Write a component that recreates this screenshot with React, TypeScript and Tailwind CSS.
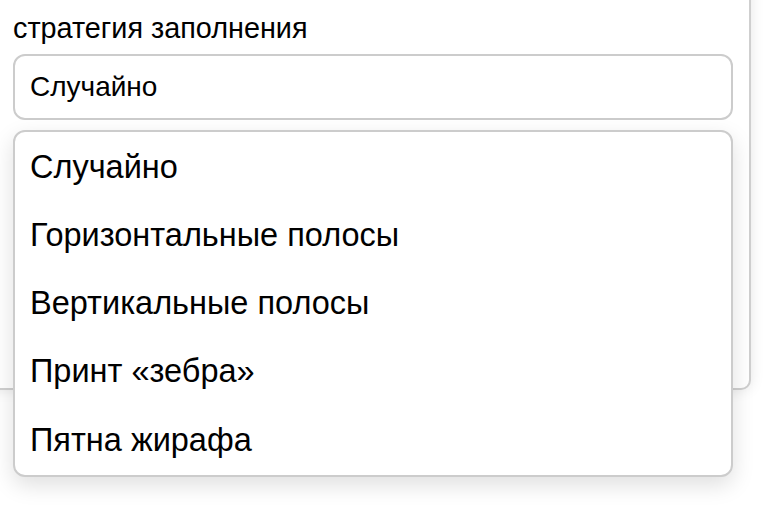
import React from 'react';

const options = [
    'Случайно',
    'Горизонтальные полосы',
    'Вертикальные полосы',
    'Принт «зебра»',
    'Пятна жирафа',
];

const App: React.FC = () => {
    return (
        <div className="w-[776px] h-[528px] bg-white overflow-hidden text-black font-['Liberation_Sans',Arial,sans-serif]">
            {/* Settings panel (cut off at top-left) */}
            <div className="-ml-[20px] -mt-[20px] w-[771px] h-[410px] bg-white border-2 border-[#cfcfcf] rounded-br-[10px] shadow-[0_0_14px_rgba(0,0,0,0.10)] pl-[31px] pr-[16px] pt-[30px]">
                <label className="block text-[28.8px] leading-[32px]">стратегия заполнения</label>

                <div className="relative mt-[10px]">
                    {/* Select trigger */}
                    <div className="h-[66px] border-2 border-[#cccccc] rounded-[12px] px-[15px] flex items-center text-[28px] bg-white">
                        Случайно
                    </div>

                    {/* Options list */}
                    <div className="absolute left-0 right-0 top-[76px] h-[347px] bg-white border-2 border-[#cccccc] rounded-[12px] shadow-[0_8px_22px_rgba(0,0,0,0.13)] flex flex-col py-[1px] z-10">
                        {options.map((opt) => (
                            <div key={opt} className="flex-1 flex items-center px-[15px] text-[32.5px]">
                                {opt}
                            </div>
                        ))}
                    </div>
                </div>
            </div>
        </div>
    );
};

export default App;
